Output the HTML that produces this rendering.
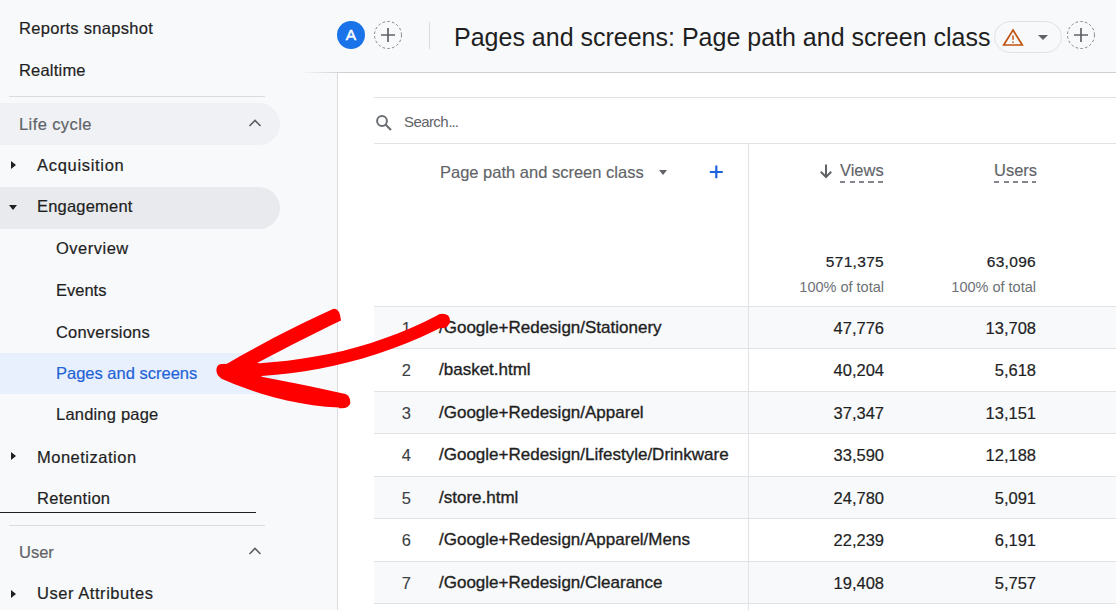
<!DOCTYPE html>
<html><head><meta charset="utf-8">
<style>
*{margin:0;padding:0;box-sizing:border-box}
html,body{width:1116px;height:610px;overflow:hidden;background:#f8f9fb;font-family:"Liberation Sans",sans-serif;color:#1f1f1f}
.a{position:absolute;white-space:nowrap}
.nav{font-size:16.5px;line-height:20px;letter-spacing:0.4px;color:#1f1f1f;-webkit-text-stroke:0.2px currentColor}
.pill{position:absolute;left:0;width:280px;height:42px;border-radius:0 21px 21px 0}
.tri-r{position:absolute;width:0;height:0;border-top:4px solid transparent;border-bottom:4px solid transparent;border-left:5px solid #1f1f1f}
.tri-d{position:absolute;width:0;height:0;border-left:4.5px solid transparent;border-right:4.5px solid transparent;border-top:5px solid #1f1f1f}
.hl{position:absolute;height:1px;background:#e0e2e6}
.t{font-size:17px;line-height:20px;color:#1f1f1f;-webkit-text-stroke:0.35px #1f1f1f}
.n{font-size:16.5px;line-height:20px;color:#1f1f1f;text-align:right;-webkit-text-stroke:0.2px #1f1f1f}
</style></head>
<body>
<div class="a nav" style="left:19px;top:18px;letter-spacing:0.3px">Reports snapshot</div>
<div class="a nav" style="left:19px;top:60px;letter-spacing:0.2px">Realtime</div>
<div class="hl" style="left:9px;top:96px;width:256px;background:#dadce0"></div>
<div class="pill" style="top:103px;background:#eff1f4"></div>
<div class="a nav" style="left:19px;top:114px;color:#5f6368;letter-spacing:0.4px">Life cycle</div>
<svg class="a" style="left:247px;top:117px" width="16" height="12" viewBox="0 0 16 12"><path d="M2.5 9 L8 3.5 L13.5 9" fill="none" stroke="#5b5f63" stroke-width="1.6"/></svg>
<div class="tri-r" style="left:11px;top:161px"></div>
<div class="a nav" style="left:37px;top:155px;letter-spacing:0.7px">Acquisition</div>
<div class="pill" style="top:187px;background:#e8eaee"></div>
<div class="tri-d" style="left:9px;top:205px"></div>
<div class="a nav" style="left:37px;top:196px;letter-spacing:0.2px">Engagement</div>
<div class="a nav" style="left:56px;top:238px;letter-spacing:0.5px">Overview</div>
<div class="a nav" style="left:56px;top:280px;letter-spacing:0.0px">Events</div>
<div class="a nav" style="left:56px;top:322px;letter-spacing:0.2px">Conversions</div>
<div class="pill" style="top:353px;height:41px;background:#e8f0fe"></div>
<div class="a nav" style="left:56px;top:363px;color:#1f63d6;letter-spacing:0.0px">Pages and screens</div>
<div class="a nav" style="left:56px;top:404px;letter-spacing:0.2px">Landing page</div>
<div class="tri-r" style="left:11px;top:452px"></div>
<div class="a nav" style="left:37px;top:447px;letter-spacing:0.5px">Monetization</div>
<div class="a nav" style="left:37px;top:488px;letter-spacing:0.3px">Retention</div>
<div class="a" style="left:0;top:512px;width:256px;height:1px;background:#1f1f1f"></div>
<div class="hl" style="left:9px;top:525px;width:256px;background:#dadce0"></div>
<div class="a nav" style="left:19px;top:542px;color:#5f6368;letter-spacing:0.0px">User</div>
<svg class="a" style="left:247px;top:545px" width="16" height="12" viewBox="0 0 16 12"><path d="M2.5 9 L8 3.5 L13.5 9" fill="none" stroke="#5b5f63" stroke-width="1.6"/></svg>
<div class="tri-r" style="left:11px;top:590px"></div>
<div class="a nav" style="left:37px;top:583px;letter-spacing:0.55px">User Attributes</div>
<div class="a" style="left:337px;top:21px;width:28px;height:28px;border-radius:50%;background:#1a73e8;color:#fff;font-size:15.5px;-webkit-text-stroke:0.5px #fff;line-height:27px;text-align:center">A</div>
<svg class="a" style="left:374px;top:21px" width="28" height="28" viewBox="0 0 28 28"><circle cx="14" cy="14" r="13.5" fill="none" stroke="#80868b" stroke-width="1" stroke-dasharray="2.6 2.2"/><path d="M7 14 H21 M14 7 V21" stroke="#5f6368" stroke-width="1.7"/></svg>
<div class="a" style="left:429px;top:22px;width:1px;height:27px;background:#dadce0"></div>
<div class="a" style="left:454px;top:22px;font-size:25px;line-height:30px;color:#1f1f1f">Pages and screens: Page path and screen class</div>
<div class="a" style="left:994px;top:21px;width:68px;height:32px;border-radius:16px;border:1px solid #e0e2e5"></div>
<svg class="a" style="left:1002px;top:27px" width="22" height="20" viewBox="0 0 22 20"><path d="M11 3 L20.3 18 H1.7 Z" fill="none" stroke="#c0530f" stroke-width="1.7" stroke-linejoin="miter"/><path d="M11 8.5 V12.8 M11 14.4 V16" stroke="#c0530f" stroke-width="1.5"/></svg>
<div class="tri-d" style="left:1038px;top:35px;border-top-color:#5f6368;border-left-width:5px;border-right-width:5px"></div>
<svg class="a" style="left:1067px;top:21px" width="28" height="28" viewBox="0 0 28 28"><circle cx="14" cy="14" r="13.5" fill="none" stroke="#80868b" stroke-width="1" stroke-dasharray="2.6 2.2"/><path d="M7 14 H21 M14 7 V21" stroke="#5f6368" stroke-width="1.7"/></svg>
<div class="a" style="left:337px;top:72px;width:779px;height:538px;background:#fff;border-left:1px solid #dadce0"></div>
<div class="a" style="left:300px;top:72px;width:816px;height:1px;background:linear-gradient(90deg,rgba(200,202,206,0),#cfd1d5 40px)"></div>
<div class="hl" style="left:374px;top:97px;width:742px"></div>
<svg class="a" style="left:375px;top:114px" width="18" height="18" viewBox="0 0 18 18"><circle cx="7" cy="7" r="4.9" fill="none" stroke="#6a6e73" stroke-width="2"/><path d="M10.5 10.5 L16 16" stroke="#6a6e73" stroke-width="2.1"/></svg>
<div class="a" style="left:404px;top:113px;font-size:15px;line-height:18px;letter-spacing:-0.6px;color:#5f6368">Search<span style="letter-spacing:-1px;margin-left:0.5px">...</span></div>
<div class="hl" style="left:374px;top:143px;width:742px"></div>
<div class="a" style="left:440px;top:162px;font-size:16.5px;line-height:20px;color:#5f6368;-webkit-text-stroke:0.15px #5f6368">Page path and screen class</div>
<div class="tri-d" style="left:659px;top:170px;border-top-color:#5f6368"></div>
<svg class="a" style="left:708px;top:164px" width="16" height="16" viewBox="0 0 16 16"><path d="M1.8 8 H14.8 M8.3 1.5 V14.2" stroke="#1d62da" stroke-width="2.2"/></svg>
<svg class="a" style="left:819px;top:163px" width="14" height="16" viewBox="0 0 14 16"><path d="M7 1.5 V14 M1.8 8.8 L7 14 L12.2 8.8" fill="none" stroke="#5f6368" stroke-width="2"/></svg>
<div class="a" style="left:840px;top:160px;font-size:16.5px;line-height:20px;color:#5f6368;-webkit-text-stroke:0.15px #5f6368">Views</div>
<div class="a" style="left:840px;top:181px;width:44px;height:2px;background:repeating-linear-gradient(90deg,#80868b 0 5px,transparent 5px 9.5px)"></div>
<div class="a" style="left:994px;top:160px;font-size:16.5px;line-height:20px;color:#5f6368;-webkit-text-stroke:0.15px #5f6368">Users</div>
<div class="a" style="left:994px;top:181px;width:42px;height:2px;background:repeating-linear-gradient(90deg,#80868b 0 5px,transparent 5px 9.5px)"></div>
<div class="a" style="left:760px;top:253px;width:124px;text-align:right;font-size:15.5px;letter-spacing:0.3px;-webkit-text-stroke:0.2px #202124;line-height:18px;color:#202124">571,375</div>
<div class="a" style="left:760px;top:278px;width:124px;text-align:right;font-size:14.5px;line-height:18px;color:#6d7175">100% of total</div>
<div class="a" style="left:912px;top:253px;width:124px;text-align:right;font-size:15.5px;letter-spacing:0.3px;-webkit-text-stroke:0.2px #202124;line-height:18px;color:#202124">63,096</div>
<div class="a" style="left:912px;top:278px;width:124px;text-align:right;font-size:14.5px;line-height:18px;color:#6d7175">100% of total</div>
<div class="hl" style="left:374px;top:306px;width:742px"></div>
<div class="a" style="left:374px;top:307px;width:742px;height:42px;background:#f8f9fa"></div>
<div class="hl" style="left:374px;top:348px;width:742px"></div>
<div class="a n" style="left:380px;top:318px;width:31px;color:#3c4043;-webkit-text-stroke:0.1px #3c4043">1</div>
<div class="a t" style="left:439px;top:318px">/Google+Redesign/Stationery</div>
<div class="a n" style="left:760px;top:318px;width:124px">47,776</div>
<div class="a n" style="left:912px;top:318px;width:124px">13,708</div>
<div class="a" style="left:374px;top:349px;width:742px;height:43px;background:#fff"></div>
<div class="hl" style="left:374px;top:391px;width:742px"></div>
<div class="a n" style="left:380px;top:360px;width:31px;color:#3c4043;-webkit-text-stroke:0.1px #3c4043">2</div>
<div class="a t" style="left:439px;top:360px">/basket.html</div>
<div class="a n" style="left:760px;top:360px;width:124px">40,204</div>
<div class="a n" style="left:912px;top:360px;width:124px">5,618</div>
<div class="a" style="left:374px;top:392px;width:742px;height:42px;background:#f8f9fa"></div>
<div class="hl" style="left:374px;top:433px;width:742px"></div>
<div class="a n" style="left:380px;top:403px;width:31px;color:#3c4043;-webkit-text-stroke:0.1px #3c4043">3</div>
<div class="a t" style="left:439px;top:403px">/Google+Redesign/Apparel</div>
<div class="a n" style="left:760px;top:403px;width:124px">37,347</div>
<div class="a n" style="left:912px;top:403px;width:124px">13,151</div>
<div class="a" style="left:374px;top:434px;width:742px;height:43px;background:#fff"></div>
<div class="hl" style="left:374px;top:476px;width:742px"></div>
<div class="a n" style="left:380px;top:445px;width:31px;color:#3c4043;-webkit-text-stroke:0.1px #3c4043">4</div>
<div class="a t" style="left:439px;top:445px">/Google+Redesign/Lifestyle/Drinkware</div>
<div class="a n" style="left:760px;top:445px;width:124px">33,590</div>
<div class="a n" style="left:912px;top:445px;width:124px">12,188</div>
<div class="a" style="left:374px;top:477px;width:742px;height:42px;background:#f8f9fa"></div>
<div class="hl" style="left:374px;top:518px;width:742px"></div>
<div class="a n" style="left:380px;top:488px;width:31px;color:#3c4043;-webkit-text-stroke:0.1px #3c4043">5</div>
<div class="a t" style="left:439px;top:488px">/store.html</div>
<div class="a n" style="left:760px;top:488px;width:124px">24,780</div>
<div class="a n" style="left:912px;top:488px;width:124px">5,091</div>
<div class="a" style="left:374px;top:519px;width:742px;height:43px;background:#fff"></div>
<div class="hl" style="left:374px;top:561px;width:742px"></div>
<div class="a n" style="left:380px;top:530px;width:31px;color:#3c4043;-webkit-text-stroke:0.1px #3c4043">6</div>
<div class="a t" style="left:439px;top:530px">/Google+Redesign/Apparel/Mens</div>
<div class="a n" style="left:760px;top:530px;width:124px">22,239</div>
<div class="a n" style="left:912px;top:530px;width:124px">6,191</div>
<div class="a" style="left:374px;top:562px;width:742px;height:42px;background:#f8f9fa"></div>
<div class="hl" style="left:374px;top:603px;width:742px"></div>
<div class="a n" style="left:380px;top:573px;width:31px;color:#3c4043;-webkit-text-stroke:0.1px #3c4043">7</div>
<div class="a t" style="left:439px;top:573px">/Google+Redesign/Clearance</div>
<div class="a n" style="left:760px;top:573px;width:124px">19,408</div>
<div class="a n" style="left:912px;top:573px;width:124px">5,757</div>
<div class="a" style="left:748px;top:143px;width:1px;height:467px;background:#e0e2e6"></div>
<svg class="a" style="left:0;top:0" width="1116" height="610" viewBox="0 0 1116 610"><path fill="#ff0000" d="M216.5 371 C216 366 219 363.5 223 364 L227.0 363.8 L242.1 355.1 L257.3 346.7 L272.4 338.5 L287.6 330.7 L302.7 323.2 L317.9 316.0 L333.0 309.0 Q339.5 307.5 341 320.2 L341.0 320.4 L329.0 326.2 L317.0 332.2 L305.0 338.2 L293.0 344.3 L281.0 350.4 L269.0 356.7 L257.0 362.9 L260.0 363.3 L273.8 362.1 L287.5 360.7 L301.3 358.8 L315.1 356.6 L328.8 353.9 L342.6 350.9 L356.4 347.3 L370.2 343.2 L383.9 338.6 L397.7 333.5 L411.5 327.8 L425.2 321.4 L439.0 314.5 Q452 312 449.4 324.2 L449.0 323.6 L434.6 330.8 L420.2 337.5 L405.8 343.5 L391.3 349.0 L376.9 354.0 L362.5 358.4 L348.1 362.3 L333.7 365.7 L319.3 368.7 L304.8 371.2 L290.4 373.2 L276.0 374.8 L261.6 375.9 L261.6 376.8 L273.1 378.9 L284.6 381.2 L296.1 383.4 L307.5 385.8 L319.0 388.2 L330.5 390.7 L342.0 393.2 Q350.5 393.5 350.3 403.3 Q349 409 339 408.2 L339.0 407.6 L325.9 406.7 L312.9 405.2 L299.8 403.1 L286.8 400.5 L273.7 397.2 L260.7 393.5 L247.6 389.1 L234.6 384.2 L221.5 378.7 Q216.5 375 216.5 371 Z"/><circle cx="442.3" cy="321" r="7.3" fill="#ff0000"/></svg>
</body></html>
